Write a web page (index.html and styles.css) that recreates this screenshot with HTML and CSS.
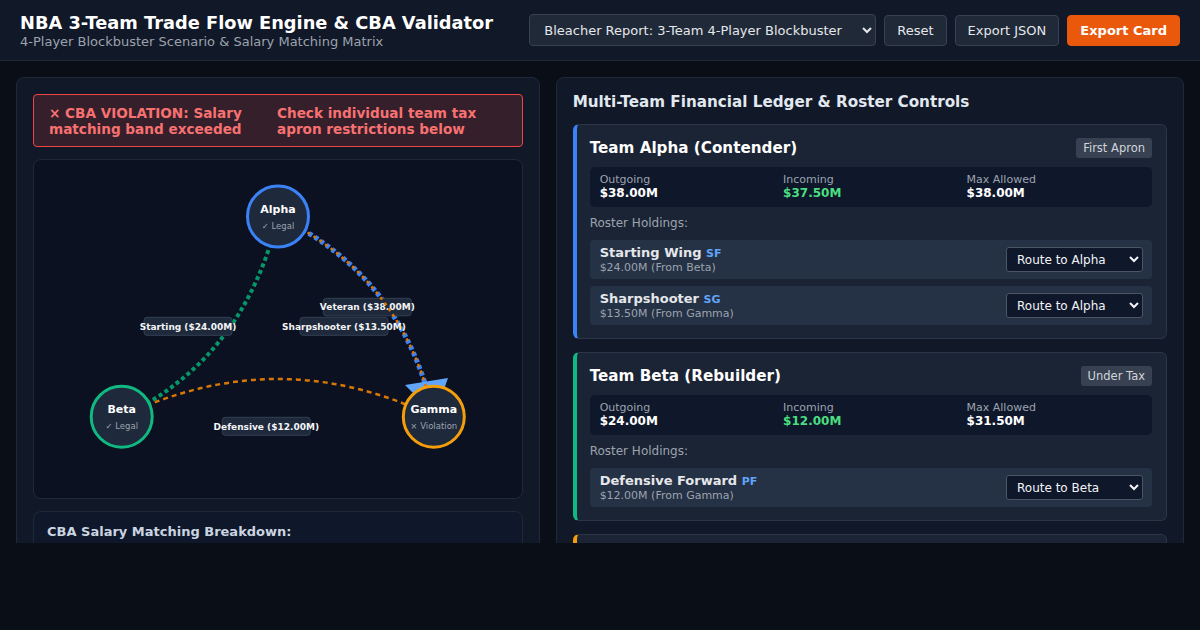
FILE: index.html
```html
<!DOCTYPE html>
<html lang="en">
<head>
<meta charset="utf-8">
<title>NBA 3-Team Trade Flow Engine</title>
<link rel="stylesheet" href="styles.css">
</head>
<body>
<header class="topbar">
  <div class="brand">
    <h1 class="title">NBA 3-Team Trade Flow Engine &amp; CBA Validator</h1>
    <div class="subtitle">4-Player Blockbuster Scenario &amp; Salary Matching Matrix</div>
  </div>
  <div class="controls">
    <select class="scenario">
      <option>Bleacher Report: 3-Team 4-Player Blockbuster</option>
    </select>
    <button class="btn">Reset</button>
    <button class="btn">Export JSON</button>
    <button class="btn btn-primary">Export Card</button>
  </div>
</header>

<main class="main">
  <section class="panel left">
    <div class="violation">
      <span class="v-main">× CBA VIOLATION: Salary matching band exceeded</span>
      <span class="v-side">Check individual team tax apron restrictions below</span>
    </div>

    <div class="diagram">
      <svg class="flow" width="487" height="338" viewBox="0 0 487 338">
        <path class="edge edge-green" d="M244,56.5 Q210.2,199.4 87.7,256.7"/>
        <g class="label"><rect x="110" y="157.3" width="88" height="18" rx="3"/><text x="154" y="169.6">Starting ($24.00M)</text></g>

        <path class="edge edge-blue" d="M244,56.5 Q370.1,116.8 399.8,256.7"/>
        <polygon class="arrow" points="371,225 414,218 401,255"/>
        <g class="label"><rect x="289.3" y="138.3" width="88" height="17.5" rx="3"/><text x="333.3" y="150.4">Veteran ($38.00M)</text></g>

        <path class="edge edge-orange-thick" d="M244,56.5 Q370.1,116.8 399.8,256.7"/>
        <g class="label"><rect x="266" y="157.3" width="88" height="18" rx="3"/><text x="310" y="169.6">Sharpshooter ($13.50M)</text></g>

        <path class="edge edge-orange" d="M87.7,256.7 Q243.75,181.3 399.8,256.7"/>
        <g class="label"><rect x="188.3" y="257.3" width="88" height="18" rx="3"/><text x="232.3" y="269.6">Defensive ($12.00M)</text></g>

        <g class="node node-alpha">
          <circle cx="244" cy="56.5" r="30.5"/>
          <text class="n-name" x="244" y="53">Alpha</text>
          <text class="n-status" x="244" y="68.5">✓ Legal</text>
        </g>
        <g class="node node-beta">
          <circle cx="87.7" cy="256.7" r="30.5"/>
          <text class="n-name" x="87.7" y="253.2">Beta</text>
          <text class="n-status" x="87.7" y="268.7">✓ Legal</text>
        </g>
        <g class="node node-gamma">
          <circle cx="399.8" cy="256.7" r="30.5"/>
          <text class="n-name" x="399.8" y="253.2">Gamma</text>
          <text class="n-status" x="399.8" y="268.7">× Violation</text>
        </g>
      </svg>
    </div>

    <div class="breakdown">
      <h3 class="breakdown-title">CBA Salary Matching Breakdown:</h3>
    </div>
  </section>

  <section class="panel right">
    <h2 class="panel-title">Multi-Team Financial Ledger &amp; Roster Controls</h2>

    <div class="team team-alpha">
      <div class="team-head">
        <span class="team-name">Team Alpha (Contender)</span>
        <span class="badge">First Apron</span>
      </div>
      <div class="stats">
        <div class="stat"><div class="stat-label">Outgoing</div><div class="stat-value">$38.00M</div></div>
        <div class="stat"><div class="stat-label">Incoming</div><div class="stat-value good">$37.50M</div></div>
        <div class="stat"><div class="stat-label">Max Allowed</div><div class="stat-value">$38.00M</div></div>
      </div>
      <div class="roster-label">Roster Holdings:</div>
      <div class="roster">
        <div class="player">
          <div class="p-info">
            <div class="p-name">Starting Wing <span class="pos">SF</span></div>
            <div class="p-sub">$24.00M (From Beta)</div>
          </div>
          <select class="route"><option>Route to Alpha</option></select>
        </div>
        <div class="player">
          <div class="p-info">
            <div class="p-name">Sharpshooter <span class="pos">SG</span></div>
            <div class="p-sub">$13.50M (From Gamma)</div>
          </div>
          <select class="route"><option>Route to Alpha</option></select>
        </div>
      </div>
    </div>

    <div class="team team-beta">
      <div class="team-head">
        <span class="team-name">Team Beta (Rebuilder)</span>
        <span class="badge">Under Tax</span>
      </div>
      <div class="stats">
        <div class="stat"><div class="stat-label">Outgoing</div><div class="stat-value">$24.00M</div></div>
        <div class="stat"><div class="stat-label">Incoming</div><div class="stat-value good">$12.00M</div></div>
        <div class="stat"><div class="stat-label">Max Allowed</div><div class="stat-value">$31.50M</div></div>
      </div>
      <div class="roster-label">Roster Holdings:</div>
      <div class="roster">
        <div class="player">
          <div class="p-info">
            <div class="p-name">Defensive Forward <span class="pos">PF</span></div>
            <div class="p-sub">$12.00M (From Gamma)</div>
          </div>
          <select class="route"><option>Route to Beta</option></select>
        </div>
      </div>
    </div>

    <div class="team team-gamma"></div>
  </section>
</main>
</body>
</html>
```

FILE: styles.css
```css
* { box-sizing: border-box; }

html, body {
  margin: 0;
  padding: 0;
  background: #0a0e17;
  font-family: "DejaVu Sans", "Noto Sans", sans-serif;
  color: #e5e7eb;
}

.topbar {
  height: 61px;
  background: #111827;
  border-bottom: 1px solid #1f2937;
  display: flex;
  align-items: center;
  justify-content: space-between;
  padding: 0 20px;
}

.brand { display: flex; flex-direction: column; padding-top: 0; }

.title {
  margin: 0;
  font-size: 17.8px;
  line-height: 21px;
  font-weight: bold;
  color: #ffffff;
}

.subtitle {
  font-size: 13px;
  line-height: 15px;
  color: #9ca3af;
  margin-top: 1px;
}

.controls {
  display: flex;
  align-items: center;
  gap: 8px;
}

.scenario {
  width: 347px;
  height: 32px;
  background: #1f2937;
  color: #e5e7eb;
  border: 1px solid #374151;
  border-radius: 4px;
  font-family: "DejaVu Sans", sans-serif;
  font-size: 13px;
  padding: 0 10px;
}

.btn {
  height: 31px;
  padding: 0 12px;
  background: #1f2937;
  color: #e5e7eb;
  border: 1px solid #374151;
  border-radius: 4px;
  font-family: "DejaVu Sans", sans-serif;
  font-size: 13px;
}

.btn-primary {
  background: #ea580c;
  border-color: #ea580c;
  color: #ffffff;
  font-weight: bold;
}

.main {
  height: 482px;
  overflow: hidden;
  padding: 16px 16px 0 16px;
  display: grid;
  grid-template-columns: 1fr 1.2fr;
  gap: 16px;
  align-items: start;
}

.panel {
  background: #111827;
  border: 1px solid #1f2937;
  border-radius: 8px;
  padding: 16px;
  min-height: 600px;
}

.left { display: flex; flex-direction: column; gap: 12px; }

.violation {
  display: flex;
  gap: 20px;
  background: rgba(239, 68, 68, 0.16);
  border: 1px solid #ef4444;
  border-radius: 4px;
  padding: 10px 15px 9px 15px;
  color: #f87171;
  font-weight: bold;
  font-size: 13.6px;
  line-height: 16px;
}

.v-main { flex: 0 0 208px; }
.v-side { flex: 1 1 0; }

.diagram {
  height: 340px;
  background: #0b1120;
  border: 1px solid #1f2937;
  border-radius: 8px;
}

.flow { display: block; }

.edge { fill: none; }
.edge-green { stroke: #059669; stroke-width: 4; stroke-dasharray: 4 3; }
.edge-blue { stroke: #3b82f6; stroke-width: 5; stroke-dasharray: 4 3; }
.edge-orange-thick { stroke: #d97706; stroke-width: 2.5; stroke-dasharray: 3 4; stroke-dashoffset: 1.5; }
.edge-orange { stroke: #d97706; stroke-width: 2.5; stroke-dasharray: 5 4; }

.arrow { fill: #60a5fa; }

.label rect { fill: #1e293b; stroke: #334155; stroke-width: 1; }
.label text {
  fill: #f3f4f6;
  font-size: 9px;
  font-weight: bold;
  text-anchor: middle;
  font-family: "DejaVu Sans", sans-serif;
}

.node circle { fill: #1e293b; stroke-width: 3; }
.node-alpha circle { stroke: #3b82f6; }
.node-beta circle { stroke: #10b981; }
.node-gamma circle { stroke: #f59e0b; }

.n-name {
  fill: #ffffff;
  font-size: 11px;
  font-weight: bold;
  text-anchor: middle;
  font-family: "DejaVu Sans", sans-serif;
}

.n-status {
  fill: #9ca3af;
  font-size: 8.5px;
  text-anchor: middle;
  font-family: "DejaVu Sans", sans-serif;
}

.breakdown {
  background: #0f172a;
  border: 1px solid #1f2937;
  border-radius: 8px;
  padding: 12px 13px;
  min-height: 120px;
}

.breakdown-title {
  margin: 0;
  font-size: 13px;
  line-height: 15px;
  font-weight: bold;
  color: #cbd5e1;
}

.right { display: flex; flex-direction: column; gap: 13px; }

.panel-title {
  margin: 0;
  font-size: 15.2px;
  line-height: 17px;
  font-weight: bold;
  color: #e2e8f0;
}

.team {
  background: #1b2434;
  border: 1px solid #2a3547;
  border-left: 4px solid #3b82f6;
  border-radius: 6px;
  padding: 13px 14px 13px 13px;
}

.team-beta { border-left-color: #10b981; }
.team-gamma { border-left-color: #f59e0b; min-height: 200px; }

.team-head {
  display: flex;
  justify-content: space-between;
  align-items: center;
  height: 20px;
  margin-bottom: 9px;
}

.team-name {
  font-size: 15.2px;
  font-weight: bold;
  color: #ffffff;
}

.badge {
  background: #374151;
  color: #d1d5db;
  font-size: 11.5px;
  line-height: 20px;
  padding: 0 7px;
  border-radius: 3px;
}

.stats {
  display: grid;
  grid-template-columns: 1fr 1fr 1fr;
  gap: 8px;
  background: #0f172a;
  border-radius: 5px;
  padding: 6px 10px;
  height: 40px;
}

.stat-label { font-size: 11px; line-height: 13px; color: #9ca3af; }
.stat-value { font-size: 12px; line-height: 15px; font-weight: bold; color: #ffffff; }
.stat-value.good { color: #4ade80; }

.roster-label {
  font-size: 12px;
  line-height: 14px;
  color: #9ca3af;
  margin-top: 9px;
  margin-bottom: 10px;
}

.roster { display: flex; flex-direction: column; gap: 7px; }

.player {
  display: flex;
  justify-content: space-between;
  align-items: center;
  background: #253144;
  border-radius: 4px;
  padding: 0 9px 0 10px;
  height: 39px;
}

.p-name {
  font-size: 13px;
  line-height: 14px;
  font-weight: bold;
  color: #e5e7eb;
}

.pos { font-size: 11px; color: #60a5fa; }

.p-sub {
  font-size: 11px;
  line-height: 13px;
  color: #9ca3af;
}

.route {
  width: 137px;
  height: 25px;
  background: #0f172a;
  color: #f3f4f6;
  border: 1px solid #4b5563;
  border-radius: 3px;
  font-family: "DejaVu Sans", sans-serif;
  font-size: 12px;
  padding: 0 6px;
}
```
